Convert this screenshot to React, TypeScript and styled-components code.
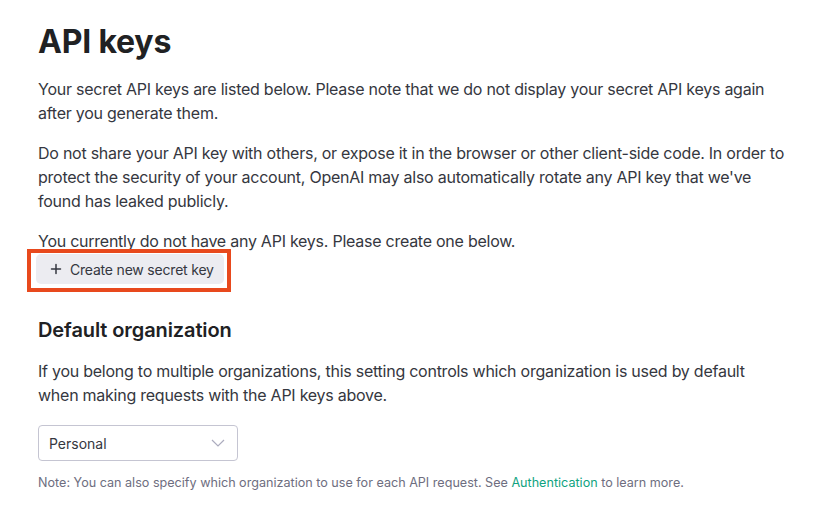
import React from "react";
import styled, { createGlobalStyle } from "styled-components";

const Global = createGlobalStyle`
  html, body { margin: 0; padding: 0; background: #ffffff; }
  body { font-family: Inter, "Noto Sans", "Liberation Sans", sans-serif; color: #353740; -webkit-font-smoothing: antialiased; }
`;

const Page = styled.main`
  padding: 22px 0 0 38px;
  width: 780px;
`;

const Title = styled.h1`
  margin: 0 0 15px;
  font-size: 32px;
  line-height: 40px;
  font-weight: 700;
  color: #202123;
  letter-spacing: -0.2px;
`;

const Para = styled.p<{ $gap?: number }>`
  margin: 0 0 ${(p) => p.$gap ?? 16}px;
  font-size: 16px;
  line-height: 24px;
  color: #353740;
  letter-spacing: -0.25px;
  white-space: nowrap;
`;

const ButtonWrap = styled.div`
  display: inline-block;
  position: relative;
  margin-left: -2px;
  &::after {
    content: "";
    position: absolute;
    left: -9px;
    right: -7px;
    top: -5px;
    bottom: -8px;
    border: 4px solid #e8491d;
    pointer-events: none;
  }
`;

const Button = styled.button`
  display: inline-flex;
  align-items: center;
  gap: 8px;
  height: 30px;
  width: 188px;
  padding: 0 0 0 14px;
  border: none;
  border-radius: 5px;
  background: #ececf1;
  color: #353740;
  font-family: inherit;
  font-size: 14px;
  letter-spacing: -0.2px;
  cursor: pointer;
`;

const Heading = styled.h2`
  margin: 32px 0 15px;
  font-size: 20px;
  line-height: 28px;
  font-weight: 600;
  color: #202123;
  letter-spacing: -0.1px;
`;

const Select = styled.div`
  margin-top: 18px;
  width: 200px;
  height: 36px;
  box-sizing: border-box;
  border: 1px solid #c5c5d2;
  border-radius: 4px;
  display: flex;
  align-items: center;
  justify-content: space-between;
  padding: 0 12px 0 10px;
  font-size: 14px;
  color: #353740;
`;

const Note = styled.p`
  margin: 12px 0 0;
  font-size: 12.6px;
  line-height: 20px;
  color: #6e6e80;
`;

const Link = styled.a`
  color: #10a37f;
  text-decoration: none;
`;

export default function App() {
  return (
    <>
      <Global />
      <Page>
        <Title>API keys</Title>
        <Para>
          Your secret API keys are listed below. Please note that we do not display your secret API keys again
          <br />
          after you generate them.
        </Para>
        <Para>
          Do not share your API key with others, or expose it in the browser or other client-side code. In order to
          <br />
          protect the security of your account, OpenAI may also automatically rotate any API key that we've
          <br />
          found has leaked publicly.
        </Para>
        <Para $gap={1}>You currently do not have any API keys. Please create one below.</Para>
        <ButtonWrap>
          <Button>
            <svg width="12" height="12" viewBox="0 0 12 12" fill="none" stroke="#353740" strokeWidth="1.5" strokeLinecap="round">
              <path d="M6 1.5v9M1.5 6h9" />
            </svg>
            Create new secret key
          </Button>
        </ButtonWrap>
        <Heading>Default organization</Heading>
        <Para $gap={0}>
          If you belong to multiple organizations, this setting controls which organization is used by default
          <br />
          when making requests with the API keys above.
        </Para>
        <Select>
          <span>Personal</span>
          <svg width="14" height="8" viewBox="0 0 14 8" fill="none" stroke="#acacbe" strokeWidth="1.2">
            <path d="M1 1l6 6 6-6" />
          </svg>
        </Select>
        <Note>
          Note: You can also specify which organization to use for each API request. See <Link href="#">Authentication</Link> to learn more.
        </Note>
      </Page>
    </>
  );
}
